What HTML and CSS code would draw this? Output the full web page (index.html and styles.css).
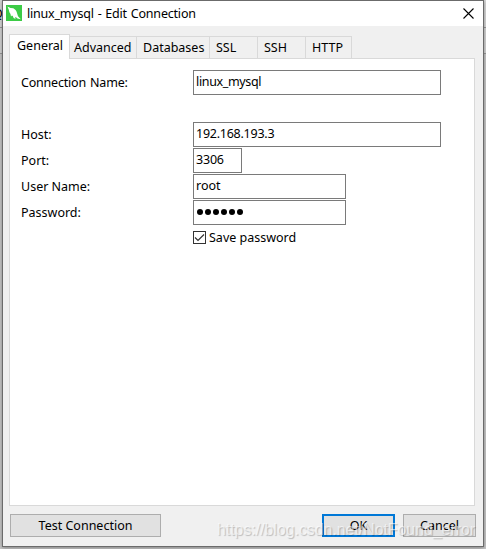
FILE: index.html
```html
<!DOCTYPE html>
<html lang="en">
<head>
    <meta charset="UTF-8">
    <title>linux_mysql - Edit Connection</title>
    <link rel="stylesheet" href="styles.css">
</head>
<body>

<div class="backdrop"><span>Q</span></div>

<div class="dialog">
    <header class="titlebar">
        <svg class="logo" width="16" height="16" viewBox="0 0 16 16">
            <rect width="16" height="16" fill="#3ccb46"/>
            <path d="M1.4 1.6 4.5 3 7.3 3.3C9.3 4.3 10.6 6 11.2 8.8L12 11.2l2.8 3-3.3-.8-1.5-1.2-1.2.3 1 1.6-2.2-1.2-.8-2-.9-.5-.9 1L4.5 9 3.4 7.3 2.8 4.7z" fill="#fff"/>
        </svg>
        <h1>linux_mysql - Edit Connection</h1>
        <svg class="close" width="11" height="11" viewBox="0 0 11 11">
            <path d="M.5.5l10 10M10.5.5l-10 10" stroke="#000" stroke-width="1.1"/>
        </svg>
    </header>

    <nav class="tabs">
        <div class="tab general active"><span>General</span></div>
        <div class="tab advanced"><span>Advanced</span></div>
        <div class="tab databases"><span>Databases</span></div>
        <div class="tab"><span>SSL</span></div>
        <div class="tab"><span>SSH</span></div>
        <div class="tab http"><span>HTTP</span></div>
    </nav>

    <form class="panel">
        <div class="row name-row">
            <label for="name">Connection Name:</label>
            <input type="text" id="name" value="linux_mysql">
        </div>
        <div class="row">
            <label for="host">Host:</label>
            <input type="text" id="host" value="192.168.193.3">
        </div>
        <div class="row">
            <label for="port">Port:</label>
            <input class="short" type="text" id="port" value="3306">
        </div>
        <div class="row">
            <label for="user">User Name:</label>
            <input class="medium" type="text" id="user" value="root">
        </div>
        <div class="row">
            <label for="password">Password:</label>
            <div class="medium password" id="password"><i></i><i></i><i></i><i></i><i></i><i></i></div>
        </div>
        <div class="save">
            <svg width="13" height="13" viewBox="0 0 13 13">
                <rect x=".5" y=".5" width="12" height="12" fill="#fff" stroke="#333"/>
                <path d="M2 6.5 5 9.5 11 3.5" fill="none" stroke="#333" stroke-width="1.2"/>
            </svg>
            <span>Save password</span>
        </div>
    </form>

    <footer class="buttons">
        <button class="test" type="button"><span>Test Connection</span></button>
        <button class="ok" type="button"><span>OK</span></button>
        <button class="cancel" type="button"><span>Cancel</span></button>
    </footer>
</div>

<div class="watermark">https://blog.csdn.net/NotFound_error</div>

</body>
</html>
```

FILE: styles.css
```css
* {
    box-sizing: border-box;
}
body {
    margin: 0;
    width: 486px;
    height: 549px;
    overflow: hidden;
    position: relative;
    background: #c9c9c9;
    font-family: "Noto Sans", "Open Sans", sans-serif;
    font-size: 12.5px;
    color: #000;
}
/* Window behind the dialog */
.backdrop {
    position: absolute;
    inset: 0;
    background: linear-gradient(#d8d8d8 27px, #999 27px, #999 28px, #d4d4d4 28px, #d4d4d4 53px, #999 53px, #999 54px, #c8c8c8 54px);
}
.backdrop span {
    position: absolute;
    left: -7px;
    top: 5px;
}
.dialog {
    position: relative;
    width: 482px;
    height: 547px;
    margin-left: 2px;
    border: 1px solid #6b6b6b;
    background: #f0f0f0;
    box-shadow: 0 1px 4px rgba(0, 0, 0, 0.35);
}
.titlebar {
    display: flex;
    align-items: center;
    height: 25px;
    padding: 0 9px 0 3px;
    background: #fff;
}
.logo {
    position: relative;
    top: -1px;
}
h1 {
    flex: 1;
    margin: 0 0 0 5px;
    font-size: 12.5px;
    font-weight: normal;
    line-height: 23px;
    letter-spacing: -0.2px;
    word-spacing: 0.8px;
}
.tabs {
    display: flex;
    align-items: flex-end;
    height: 32px;
    padding: 7px 0 0 6px;
}
.tab {
    width: 48px;
    height: 22px;
    padding-left: 6px;
    border: 1px solid #d9d9d9;
    border-width: 1px 1px 0 0;
    line-height: 21px;
    white-space: nowrap;
}
.general {
    width: 61px;
    height: 25px;
    padding-left: 7px;
}
.advanced {
    width: 67px;
    padding-left: 4px;
}
.databases {
    width: 73px;
}
.http {
    width: 46px;
}
.active {
    position: relative;
    z-index: 1;
    margin-bottom: -1px;
    border-left-width: 1px;
    background: #fff;
}
.panel {
    width: 466px;
    height: 448px;
    margin: 0 0 0 6px;
    padding: 11px 0 0 11px;
    border: 1px solid #d9d9d9;
    background: #fff;
}
.row {
    display: flex;
    height: 26px;
}
.name-row {
    margin-bottom: 26px;
}
.row label {
    width: 172px;
    line-height: 25px;
}
.name-row label {
    letter-spacing: -0.2px;
    word-spacing: 1px;
}
input, .password {
    width: 248px;
    height: 25px;
    padding: 0 2px 2px;
    border: 1px solid #7a7a7a;
    border-radius: 0;
    background: #fff;
    font: inherit;
    color: #000;
}
.name-row input {
    letter-spacing: -0.35px;
}
#host {
    letter-spacing: -0.25px;
}
.short {
    width: 49px;
    letter-spacing: -0.2px;
}
.medium {
    width: 153px;
}
.password {
    display: flex;
    align-items: center;
    gap: 2px;
    padding: 0 3px 1px;
}
.password i {
    width: 6px;
    height: 6px;
    border-radius: 50%;
    background: #000;
}
.save {
    display: flex;
    align-items: center;
    height: 23px;
    padding-left: 172px;
    line-height: 20px;
}
.save span {
    margin-left: 3px;
}
.buttons {
    display: flex;
    margin: 8px 7px 0;
}
button {
    width: 73px;
    height: 23px;
    padding: 0 0 1px;
    border: 1px solid #adadad;
    background: #e1e1e1;
    font: inherit;
    color: #000;
}
.test {
    width: 151px;
    margin-right: auto;
}
.ok {
    margin-right: 8px;
    border: 2px solid #0078d7;
}
.watermark {
    position: absolute;
    left: 217px;
    top: 519px;
    font: 15.85px/22px "Liberation Sans", sans-serif;
    color: rgba(255, 255, 255, 0.6);
    text-shadow: 1px 1px 1px rgba(0, 0, 0, 0.22);
    white-space: nowrap;
}
```
